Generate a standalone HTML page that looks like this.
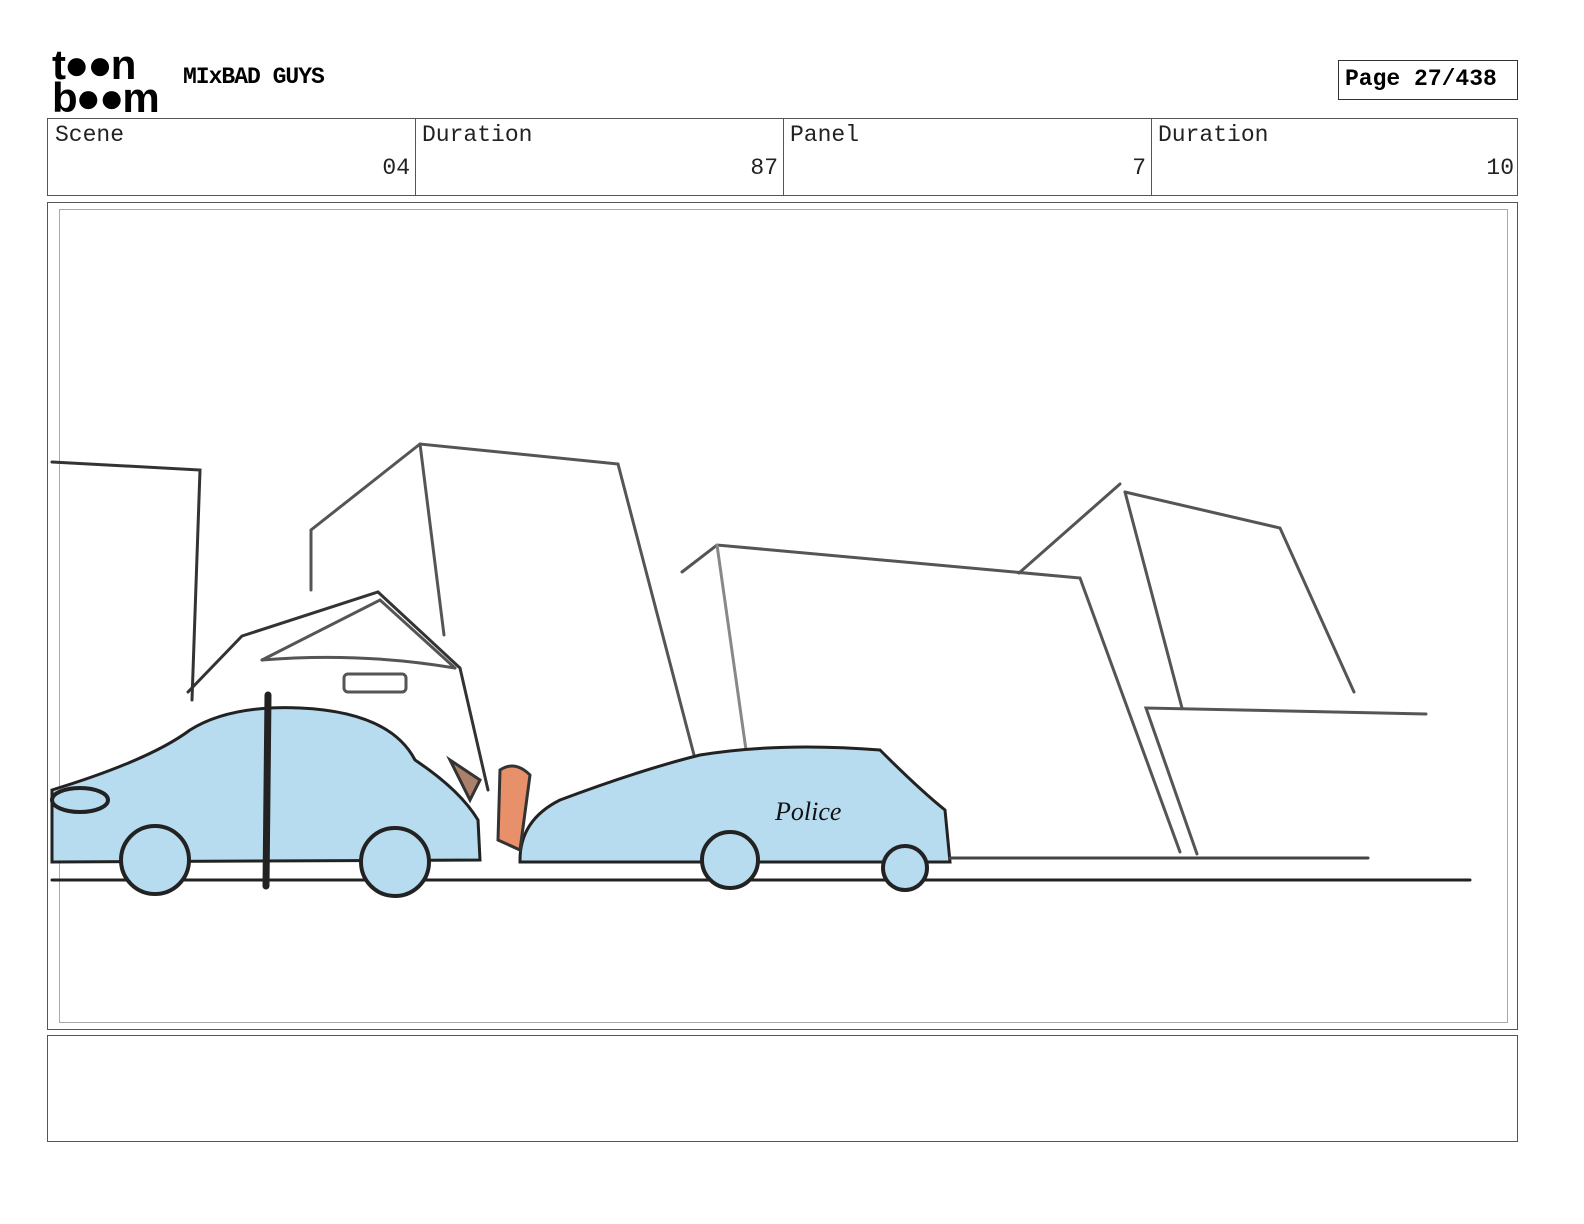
<!DOCTYPE html>
<html><head><meta charset="utf-8"><style>
body{margin:0;background:#fff;width:1584px;height:1224px;position:relative;font-family:"Liberation Mono",monospace;overflow:hidden}
.a{position:absolute}
.lbl{font-size:23px;color:#222}
.num{font-size:23px;color:#222;text-align:right}
</style></head><body>
<div class="a" style="left:52px;top:48px;font:bold 42px/33px 'Liberation Sans',sans-serif;letter-spacing:-2px;color:#000">t●●n<br>b●●m</div>
<div class="a" style="left:183px;top:64px;font:bold 23px 'Liberation Mono',monospace;letter-spacing:-1px">MIxBAD GUYS</div>
<div class="a" style="left:1338px;top:60px;width:180px;height:40px;border:1px solid #333;box-sizing:border-box;font:bold 23px 'Liberation Mono',monospace;line-height:37px;padding-left:6px">Page 27/438</div>
<div class="a" style="left:47px;top:118px;width:1471px;height:78px;border:1px solid #555;box-sizing:border-box"></div>
<div class="a" style="left:415px;top:118px;width:1px;height:78px;background:#555"></div>
<div class="a" style="left:783px;top:118px;width:1px;height:78px;background:#555"></div>
<div class="a" style="left:1151px;top:118px;width:1px;height:78px;background:#555"></div>
<div class="a lbl" style="left:55px;top:122px">Scene</div>
<div class="a lbl" style="left:422px;top:122px">Duration</div>
<div class="a lbl" style="left:790px;top:122px">Panel</div>
<div class="a lbl" style="left:1158px;top:122px">Duration</div>
<div class="a num" style="left:300px;width:110px;top:155px">04</div>
<div class="a num" style="left:668px;width:110px;top:155px">87</div>
<div class="a num" style="left:1036px;width:110px;top:155px">7</div>
<div class="a num" style="left:1404px;width:110px;top:155px">10</div>
<div class="a" style="left:47px;top:202px;width:1471px;height:828px;border:1px solid #555;box-sizing:border-box"></div>
<div class="a" style="left:59px;top:209px;width:1449px;height:814px;border:1px solid #aaa;box-sizing:border-box"></div>
<div class="a" style="left:47px;top:1035px;width:1471px;height:107px;border:1px solid #555;box-sizing:border-box"></div>
<svg class="a" style="left:0;top:0" width="1584" height="1224" fill="none" stroke="#555" stroke-width="3" stroke-linecap="round">
<polyline points="52,462 200,470 192,700" stroke="#333"/>
<polyline points="311,590 311,530 420,444 618,464 694,755"/>
<line x1="420" y1="444" x2="444" y2="635"/>
<polyline points="682,572 717,545 1080,578 1180,852"/>
<line x1="717" y1="545" x2="746" y2="750" stroke="#888"/>
<polyline points="1019,573 1120,484"/>
<polyline points="1125,492 1280,528 1354,692"/>
<line x1="1125" y1="492" x2="1182" y2="708"/>
<polyline points="1426,714 1146,708 1197,854"/>
<polyline points="188,692 242,636 378,592 460,668 488,790" stroke="#333"/>
<polyline points="262,660 380,600 455,668"/>
<path d="M262,660 Q360,652 455,668" />
<rect x="344" y="674" width="62" height="18" rx="4"/>
<path d="M52,790 Q150,760 190,730 Q230,705 300,708 Q390,712 415,760 Q460,790 478,820 L480,860 L52,862Z" fill="#b8dcef" stroke="#222"/>
<path d="M520,860 Q520,820 560,800 Q640,770 700,755 Q780,742 880,750 Q920,790 945,810 L950,862 L520,862Z" fill="#b8dcef" stroke="#222"/>
<line x1="52" y1="880" x2="1470" y2="880" stroke="#222"/>
<line x1="950" y1="858" x2="1368" y2="858" stroke="#444"/>
<g stroke="#222" stroke-width="4">
<circle cx="155" cy="860" r="34" fill="#b8dcef"/><circle cx="395" cy="862" r="34" fill="#b8dcef"/>
<circle cx="730" cy="860" r="28" fill="#b8dcef"/><circle cx="905" cy="868" r="22" fill="#b8dcef"/>
<line x1="268" y1="695" x2="266" y2="886" stroke-width="7"/>
<ellipse cx="80" cy="800" rx="28" ry="12"/>
</g>
<path d="M450,760 L480,780 L470,800Z" fill="#a9806a" stroke="#333"/>
<path d="M500,770 Q515,760 530,775 L520,850 L498,840Z" fill="#e8906a" stroke="#333"/>
<text x="775" y="820" font-family="Liberation Serif,serif" font-size="26" fill="#111" stroke="none" font-style="italic">Police</text>
</svg>
</body></html>
